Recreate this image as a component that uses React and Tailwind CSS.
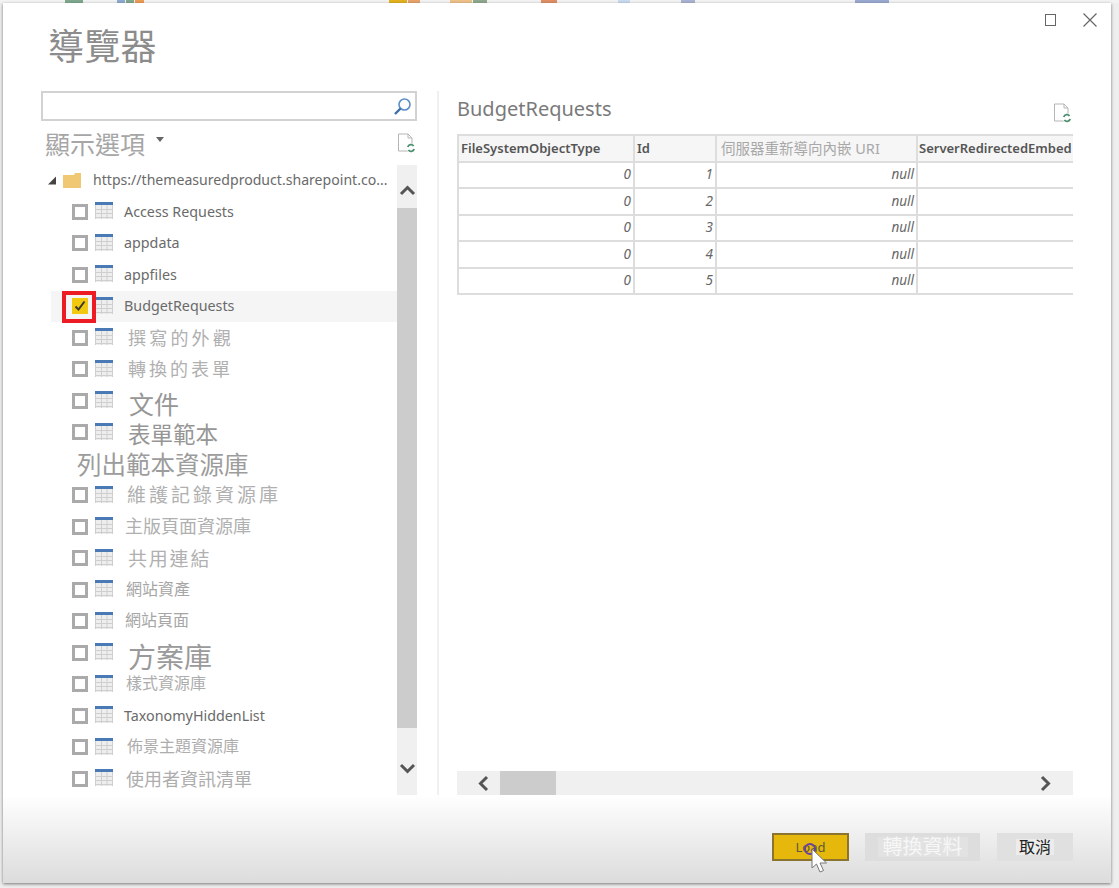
const CJK = "font-['Noto_Sans','Noto_Sans_CJK_TC',sans-serif]";

function TableIcon() {
  return (
    <svg width="18" height="17" viewBox="0 0 18 17" className="shrink-0">
      <rect x="0" y="0" width="18" height="17" fill="#eeeeee" />
      <rect x="0" y="0" width="18" height="3" fill="#4a7ab5" />
      <g stroke="#cfcfcf" strokeWidth="1">
        <path d="M0.5 3V17M6.5 3V17M12 3V17M17.5 3V17M0 7.5H18M0 11.5H18M0 15.5H18" fill="none" />
      </g>
    </svg>
  );
}

function DocRefresh() {
  return (
    <svg width="20" height="21" viewBox="0 0 20 21">
      <path d="M1.5 1H11L15 5V18H1.5Z" fill="#ffffff" stroke="#b5b5b5" strokeWidth="1" />
      <path d="M11 1V5H15" fill="none" stroke="#b5b5b5" strokeWidth="1" />
      <circle cx="14" cy="15" r="4.5" fill="#ffffff" />
      <path d="M10.8 14A3.3 3.3 0 0 1 16.6 13M17.2 16A3.3 3.3 0 0 1 11.4 17" fill="none" stroke="#4b8f70" strokeWidth="1.8" />
    </svg>
  );
}

function Chevron({ dir, className }) {
  const d = {
    up: "M2 11L8.5 4.5L15 11",
    down: "M2 4L8.5 10.5L15 4",
    left: "M11 2L4.5 8.5L11 15",
    right: "M4 2L10.5 8.5L4 15",
  }[dir];
  return (
    <svg width="17" height="17" viewBox="0 0 17 17" className={className}>
      <path d={d} fill="none" stroke="#555555" strokeWidth="3" />
    </svg>
  );
}

const rows = [
  { t: "Access Requests", c: "text-[14.3px] text-[#6a6a6a] ml-[11px]" },
  { t: "appdata", c: "text-[14.3px] text-[#6a6a6a] ml-[11px]" },
  { t: "appfiles", c: "text-[14.3px] text-[#6a6a6a] ml-[11px]" },
  { t: "BudgetRequests", c: "text-[14.3px] text-[#6a6a6a] ml-[11px]", checked: true },
  { t: "撰寫的外觀", c: "text-[18px] tracking-[3.2px] text-[#b0b0b0] ml-[15px]" },
  { t: "轉換的表單", c: "text-[18px] tracking-[3px] text-[#b0b0b0] ml-[15px]" },
  { t: "文件", c: "text-[25px] text-[#969696] ml-[16px] pt-[8px]" },
  { t: "表單範本", c: "text-[22.5px] text-[#969696] ml-[15px] pt-[6px]" },
  { t: "列出範本資源庫", c: "text-[24.5px] text-[#9c9c9c] ml-[26px] pt-[2px]", noBox: true },
  { t: "維護記錄資源庫", c: "text-[19px] tracking-[3px] text-[#b0b0b0] ml-[14px]" },
  { t: "主版頁面資源庫", c: "text-[18px] text-[#b0b0b0] ml-[12px] pb-[2px]" },
  { t: "共用連結", c: "text-[19px] tracking-[1.8px] text-[#b0b0b0] ml-[15px] pt-[2px]" },
  { t: "網站資產", c: "text-[16px] text-[#a6a6a6] ml-[13px] pb-[2px]" },
  { t: "網站頁面", c: "text-[16px] text-[#a6a6a6] ml-[12px] pb-[2px]" },
  { t: "方案庫", c: "text-[28px] text-[#9a9a9a] ml-[15px] pt-[9px]" },
  { t: "樣式資源庫", c: "text-[16px] text-[#adadad] ml-[13px] pb-[2px]" },
  { t: "TaxonomyHiddenList", c: "text-[14.3px] text-[#6a6a6a] ml-[11px]" },
  { t: "佈景主題資源庫", c: "text-[16px] text-[#adadad] ml-[14px] pb-[2px]" },
  { t: "使用者資訊清單", c: "text-[18px] text-[#adadad] ml-[13px]" },
];

function TreeRow({ r }) {
  if (r.noBox) {
    return (
      <div className={`h-[31.5px] flex items-center leading-none whitespace-nowrap ${r.c}`}>{r.t}</div>
    );
  }
  return (
    <div className={`h-[31.5px] flex items-center pl-[21px] relative ${r.checked ? "bg-[#f5f5f5]" : ""}`}>
      <div className={`w-[16px] h-[16px] shrink-0 flex items-center justify-center border-[3px] ${r.checked ? "bg-[#f2c811] border-[#f2c811]" : "border-[#aaaaaa] bg-white"}`}>
        {r.checked && (
          <svg width="12" height="12" viewBox="0 0 12 12" className="shrink-0">
            <path d="M1.5 6.5L4.5 9.5L10.5 1.5" fill="none" stroke="#3a3a2a" strokeWidth="2" />
          </svg>
        )}
      </div>
      <div className="ml-[7px] -mt-[2px]"><TableIcon /></div>
      <div className={`leading-none whitespace-nowrap ${r.c}`}>{r.t}</div>
      {r.checked && <div className="absolute left-[11px] top-[0px] w-[34px] h-[32px] border-[4px] border-[#ed1c24]" />}
    </div>
  );
}

const colW = "grid-cols-[176px_82px_201px_155px]";
const ids = [1, 2, 3, 4, 5];

function HeaderCell({ children, cjk }) {
  return (
    <div className={`h-[27px] bg-[#f6f6f6] border-r-2 border-b-2 border-[#dddddd] flex items-center whitespace-nowrap overflow-hidden leading-none ${cjk ? "pl-[4px] text-[14.5px] text-[#a8a8a8]" : "pl-[2px] text-[13px] font-semibold text-[#555555]"}`}>
      {children}
    </div>
  );
}

function Cell({ children }) {
  return (
    <div className="h-[26.4px] border-r-2 border-b-2 border-[#dddddd] flex items-center justify-end pr-[2px] text-[13.5px] italic text-[#666666] leading-none">
      {children}
    </div>
  );
}

export default function App() {
  return (
    <div className={`w-[1119px] h-[888px] bg-[#eeeeee] flex flex-col overflow-hidden ${CJK}`}>
      {/* Window behind the dialog: ribbon peeking out along the top */}
      <div className="h-[3px] shrink-0 flex items-stretch bg-[#f3f3f3]">
        <div className="ml-[65px] w-[18px] bg-[#7fa98f]" />
        <div className="ml-[34px] w-[8px] bg-[#8fa9d0]" />
        <div className="ml-[1px] w-[8px] bg-[#7fa98f]" />
        <div className="ml-[1px] w-[9px] bg-[#ee9b55]" />
        <div className="ml-[245px] w-[18px] bg-[#e3b21e]" />
        <div className="ml-[1px] w-[12px] bg-[#e9a36a]" />
        <div className="ml-[30px] w-[22px] bg-[#eec189]" />
        <div className="ml-[1px] w-[14px] bg-[#8fa98f]" />
        <div className="ml-[54px] w-[16px] bg-[#e08f65]" />
        <div className="ml-[61px] w-[12px] bg-[#c9daf0]" />
        <div className="ml-[51px] w-[14px] bg-[#aab4d0]" />
        <div className="ml-[160px] w-[34px] bg-[#9aa9d0]" />
      </div>
      <div className="flex-1 min-h-0 pl-[3px] pr-[8px] pb-[5px]">
        <div className="w-full h-full bg-white shadow-[0_1px_3px_rgba(0,0,0,0.5)] flex flex-col relative">
          {/* Title bar */}
          <div className="h-[88px] shrink-0 flex items-start justify-between pl-[45px] pr-[14px]">
            <h1 className="text-[36px] leading-none mt-[26px] tracking-[0.2px] text-[#8c8c8c] font-normal">導覽器</h1>
            <div className="flex items-center gap-[27px] mt-[10px]">
              <div className="w-[11px] h-[12px] border-[1.5px] border-[#666666]" />
              <svg width="14" height="14" viewBox="0 0 14 14">
                <path d="M0.5 0.5L13.5 13.5M13.5 0.5L0.5 13.5" stroke="#666666" strokeWidth="1.2" fill="none" />
              </svg>
            </div>
          </div>

          {/* Main */}
          <div className="flex-1 min-h-0 flex">
            <div className="w-[436px] shrink-0 pl-[38px] pr-[20px] border-r-2 border-[#f0f0f0]">
              <div className="h-[30px] border-2 border-[#d2d2d2] flex items-center justify-end pr-[3px]">
                <svg width="19" height="19" viewBox="0 0 19 19">
                  <circle cx="11.5" cy="7.5" r="5.5" fill="none" stroke="#5b8fc7" strokeWidth="1.6" />
                  <path d="M7.5 11.5L2 17" stroke="#3c6fa8" strokeWidth="2.4" />
                </svg>
              </div>
              <div className="h-[44px] flex items-center justify-between pl-[4px]">
                <div className="flex items-start mt-[2px]">
                  <span className="text-[25px] leading-none text-[#a6a6a6]">顯示選項</span>
                  <svg width="8" height="5" viewBox="0 0 8 5" className="ml-[11px] mt-[5px]">
                    <path d="M0 0H8L4 5Z" fill="#666666" />
                  </svg>
                </div>
                <DocRefresh />
              </div>
              <div className="flex h-[631px]">
                <div className="flex-1 min-w-0 pl-[10px]">
                  <div className="h-[31px] flex items-center">
                    <svg width="9" height="9" viewBox="0 0 9 9" className="ml-[-3px] shrink-0">
                      <path d="M8 0.5V8.5H0Z" fill="#444444" />
                    </svg>
                    <svg width="18" height="15" viewBox="0 0 18 15" className="ml-[6px] shrink-0">
                      <path d="M0 2H11L12 0H18V15H0Z" fill="#f0c874" />
                    </svg>
                    <span className="ml-[12px] text-[14.1px] leading-none text-[#6a6a6a] whitespace-nowrap">https://themeasuredproduct.sharepoint.co...</span>
                  </div>
                  {rows.map((r) => <TreeRow key={r.t} r={r} />)}
                </div>
                <div className="w-[20px] shrink-0 bg-[#f0f0f0] flex flex-col">
                  <div className="h-[43px] flex items-end justify-center pb-[8px]"><Chevron dir="up" /></div>
                  <div className="h-[520px] bg-[#cccccc]" />
                  <div className="flex-1 flex items-end justify-center pb-[18px]"><Chevron dir="down" /></div>
                </div>
              </div>
            </div>

            <div className="flex-1 min-w-0 pl-[18px] pr-[38px] flex flex-col">
              <div className="h-[43px] flex items-center justify-between">
                <span className="text-[20px] leading-none text-[#7a7a7a] -mt-[8px]">BudgetRequests</span>
                <div className="mt-[2px]"><DocRefresh /></div>
              </div>
              <div className={`grid ${colW} border-l-2 border-t-2 border-[#dddddd] w-[616px] overflow-hidden`}>
                <HeaderCell>FileSystemObjectType</HeaderCell>
                <HeaderCell>Id</HeaderCell>
                <HeaderCell cjk>伺服器重新導向內嵌 URI</HeaderCell>
                <div className="h-[27px] bg-[#f6f6f6] border-b-2 border-[#dddddd] flex items-center pl-[1px] whitespace-nowrap leading-none text-[13px] font-semibold text-[#555555]">ServerRedirectedEmbed</div>
                {ids.flatMap((n) => [
                  <Cell key={`a${n}`}>0</Cell>,
                  <Cell key={`b${n}`}>{n}</Cell>,
                  <Cell key={`c${n}`}>null</Cell>,
                  <div key={`d${n}`} className="h-[26.4px] border-b-2 border-[#dddddd]" />,
                ])}
              </div>
              <div className="flex-1" />
              <div className="h-[24px] w-[616px] bg-[#f0f0f0] flex items-center justify-between pl-[19px] pr-[18px]">
                <Chevron dir="left" />
                <div className="h-full w-[56px] bg-[#cccccc] mr-auto ml-[7px]" />
                <Chevron dir="right" />
              </div>
            </div>
          </div>

          {/* Footer */}
          <div className="h-[88px] shrink-0 bg-gradient-to-b from-white to-[#dcdcdc] flex items-start justify-end pt-[38px] pr-[38px]">
            <div className="relative w-[77px] h-[28px] bg-[#e6b80c] border-2 border-[#8a7430] flex items-center justify-center text-[13px] text-[#5a5a3a] leading-none">
              Load
              <div className="absolute left-[30px] top-[8px] w-[12px] h-[12px] rounded-full border-2 border-[#6b3fa0]" />
              <svg width="18" height="26" viewBox="0 0 18 26" className="absolute left-[37px] top-[13px]">
                <path d="M1 1V20L5.5 16L9 24L12.5 22.5L9 15H15.5Z" fill="#ffffff" stroke="#777777" strokeWidth="1" />
              </svg>
            </div>
            <div className="ml-[16px] w-[115px] h-[28px] bg-[#dddddd] flex items-center justify-center leading-none">
              <span className="bg-[#e2e2e2] px-[5px] text-[20px] text-[#f7f7f7]">轉換資料</span>
            </div>
            <div className="ml-[17px] w-[76px] h-[28px] bg-[#e0e0e0] flex items-center justify-center leading-none">
              <span className="bg-[#ececec] px-[3px] text-[16px] text-[#222222]">取消</span>
            </div>
          </div>
        </div>
      </div>
    </div>
  );
}
